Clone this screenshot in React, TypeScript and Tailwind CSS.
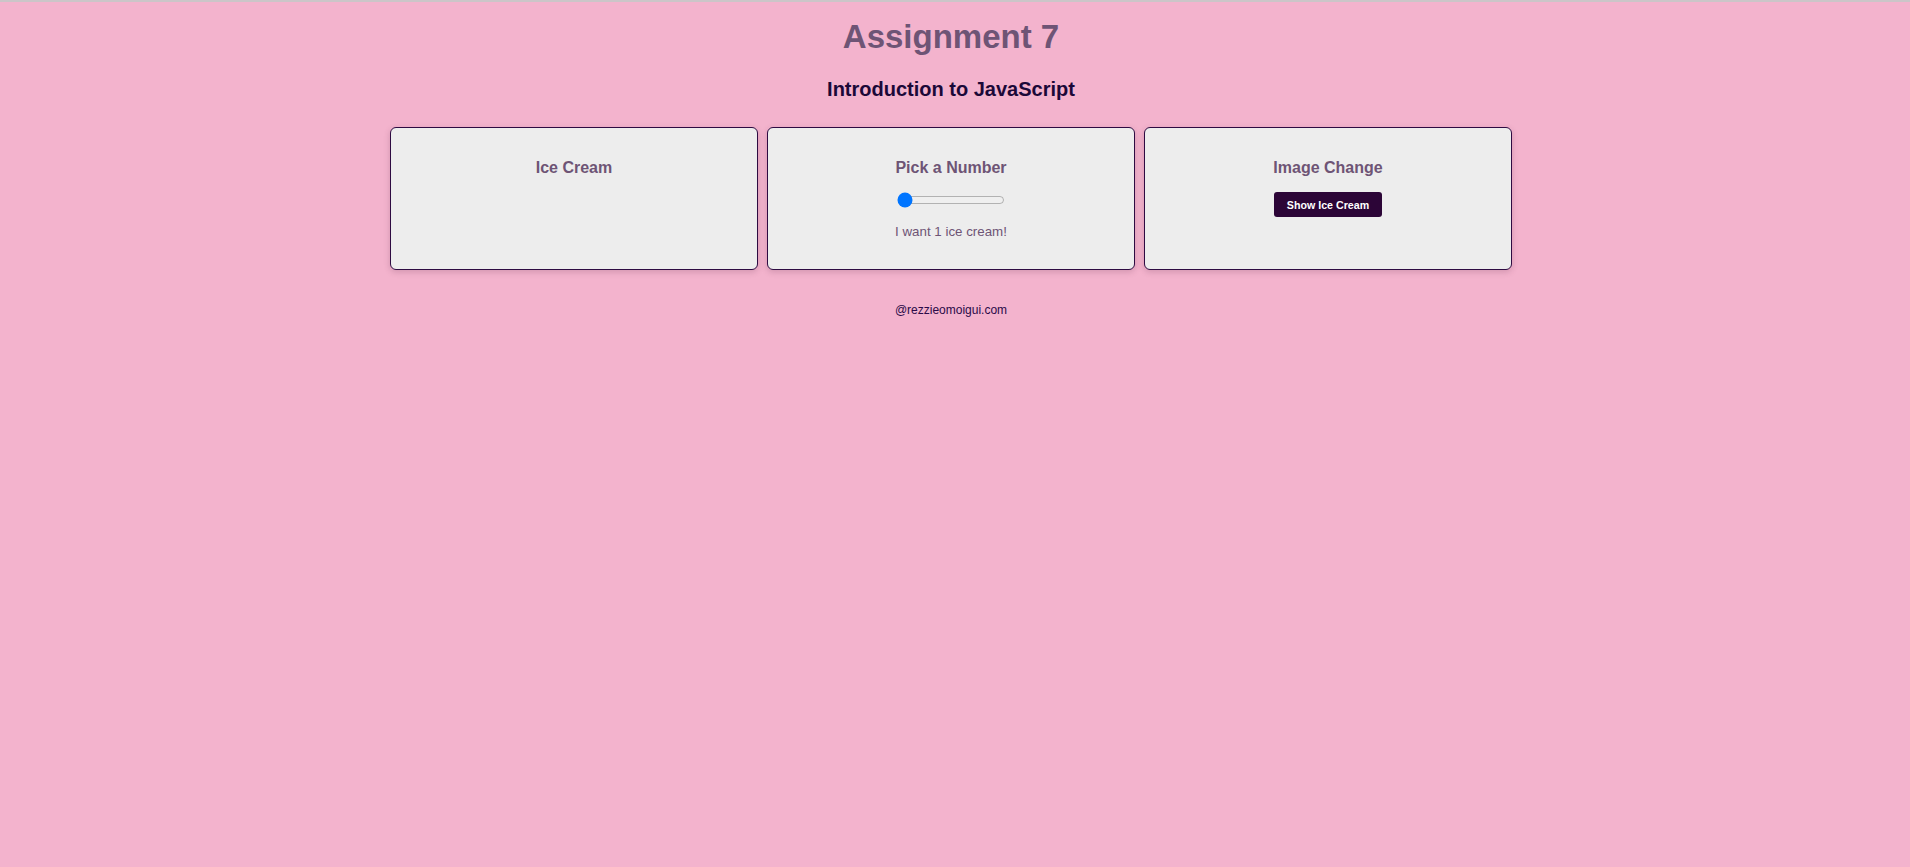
import React from "react";

export default function App() {
  return (
    <div className="min-h-[867px] w-full bg-[#f3b3cd] font-['Liberation_Sans',Arial,sans-serif]">
      <div className="h-[2px] w-full bg-[#cbc5c8]" />
      <div className="flex flex-col items-center pr-[8px]">
        <h1 className="mt-[16px] text-[33px] font-bold leading-[38px] text-[#6e5475]">Assignment 7</h1>
        <h2 className="mt-[22px] text-[20px] font-bold leading-[23px] text-[#1b0838]">Introduction to JavaScript</h2>
        <div className="mt-[26px] flex gap-[9px]">
          <div className="flex h-[143px] w-[368px] flex-col items-center rounded-[6px] border border-[#2e0b42] bg-[#ededed] pt-[31px] shadow-[0_2px_6px_rgba(90,40,70,0.22)]">
            <h3 className="text-[16px] font-bold leading-[18px] text-[#6e5475]">Ice Cream</h3>
          </div>
          <div className="flex h-[143px] w-[368px] flex-col items-center rounded-[6px] border border-[#2e0b42] bg-[#ededed] pt-[31px] shadow-[0_2px_6px_rgba(90,40,70,0.22)]">
            <h3 className="text-[16px] font-bold leading-[18px] text-[#6e5475]">Pick a Number</h3>
            <input
              type="range"
              min={1}
              max={10}
              defaultValue={1}
              className="mt-[15px] h-[16px] w-[108px] accent-[#0075ff]"
            />
            <p className="mt-[16px] text-[13.33px] leading-[15px] text-[#6e5475]">I want 1 ice cream!</p>
          </div>
          <div className="flex h-[143px] w-[368px] flex-col items-center rounded-[6px] border border-[#2e0b42] bg-[#ededed] pt-[31px] shadow-[0_2px_6px_rgba(90,40,70,0.22)]">
            <h3 className="text-[16px] font-bold leading-[18px] text-[#6e5475]">Image Change</h3>
            <button className="mt-[15px] flex h-[25px] items-center rounded-[3px] bg-[#2c0537] px-[13px] text-[10.67px] font-bold text-white">
              Show Ice Cream
            </button>
          </div>
        </div>
        <p className="mt-[33px] text-[12px] leading-[14px] text-[#2a0a48]">@rezzieomoigui.com</p>
      </div>
    </div>
  );
}
